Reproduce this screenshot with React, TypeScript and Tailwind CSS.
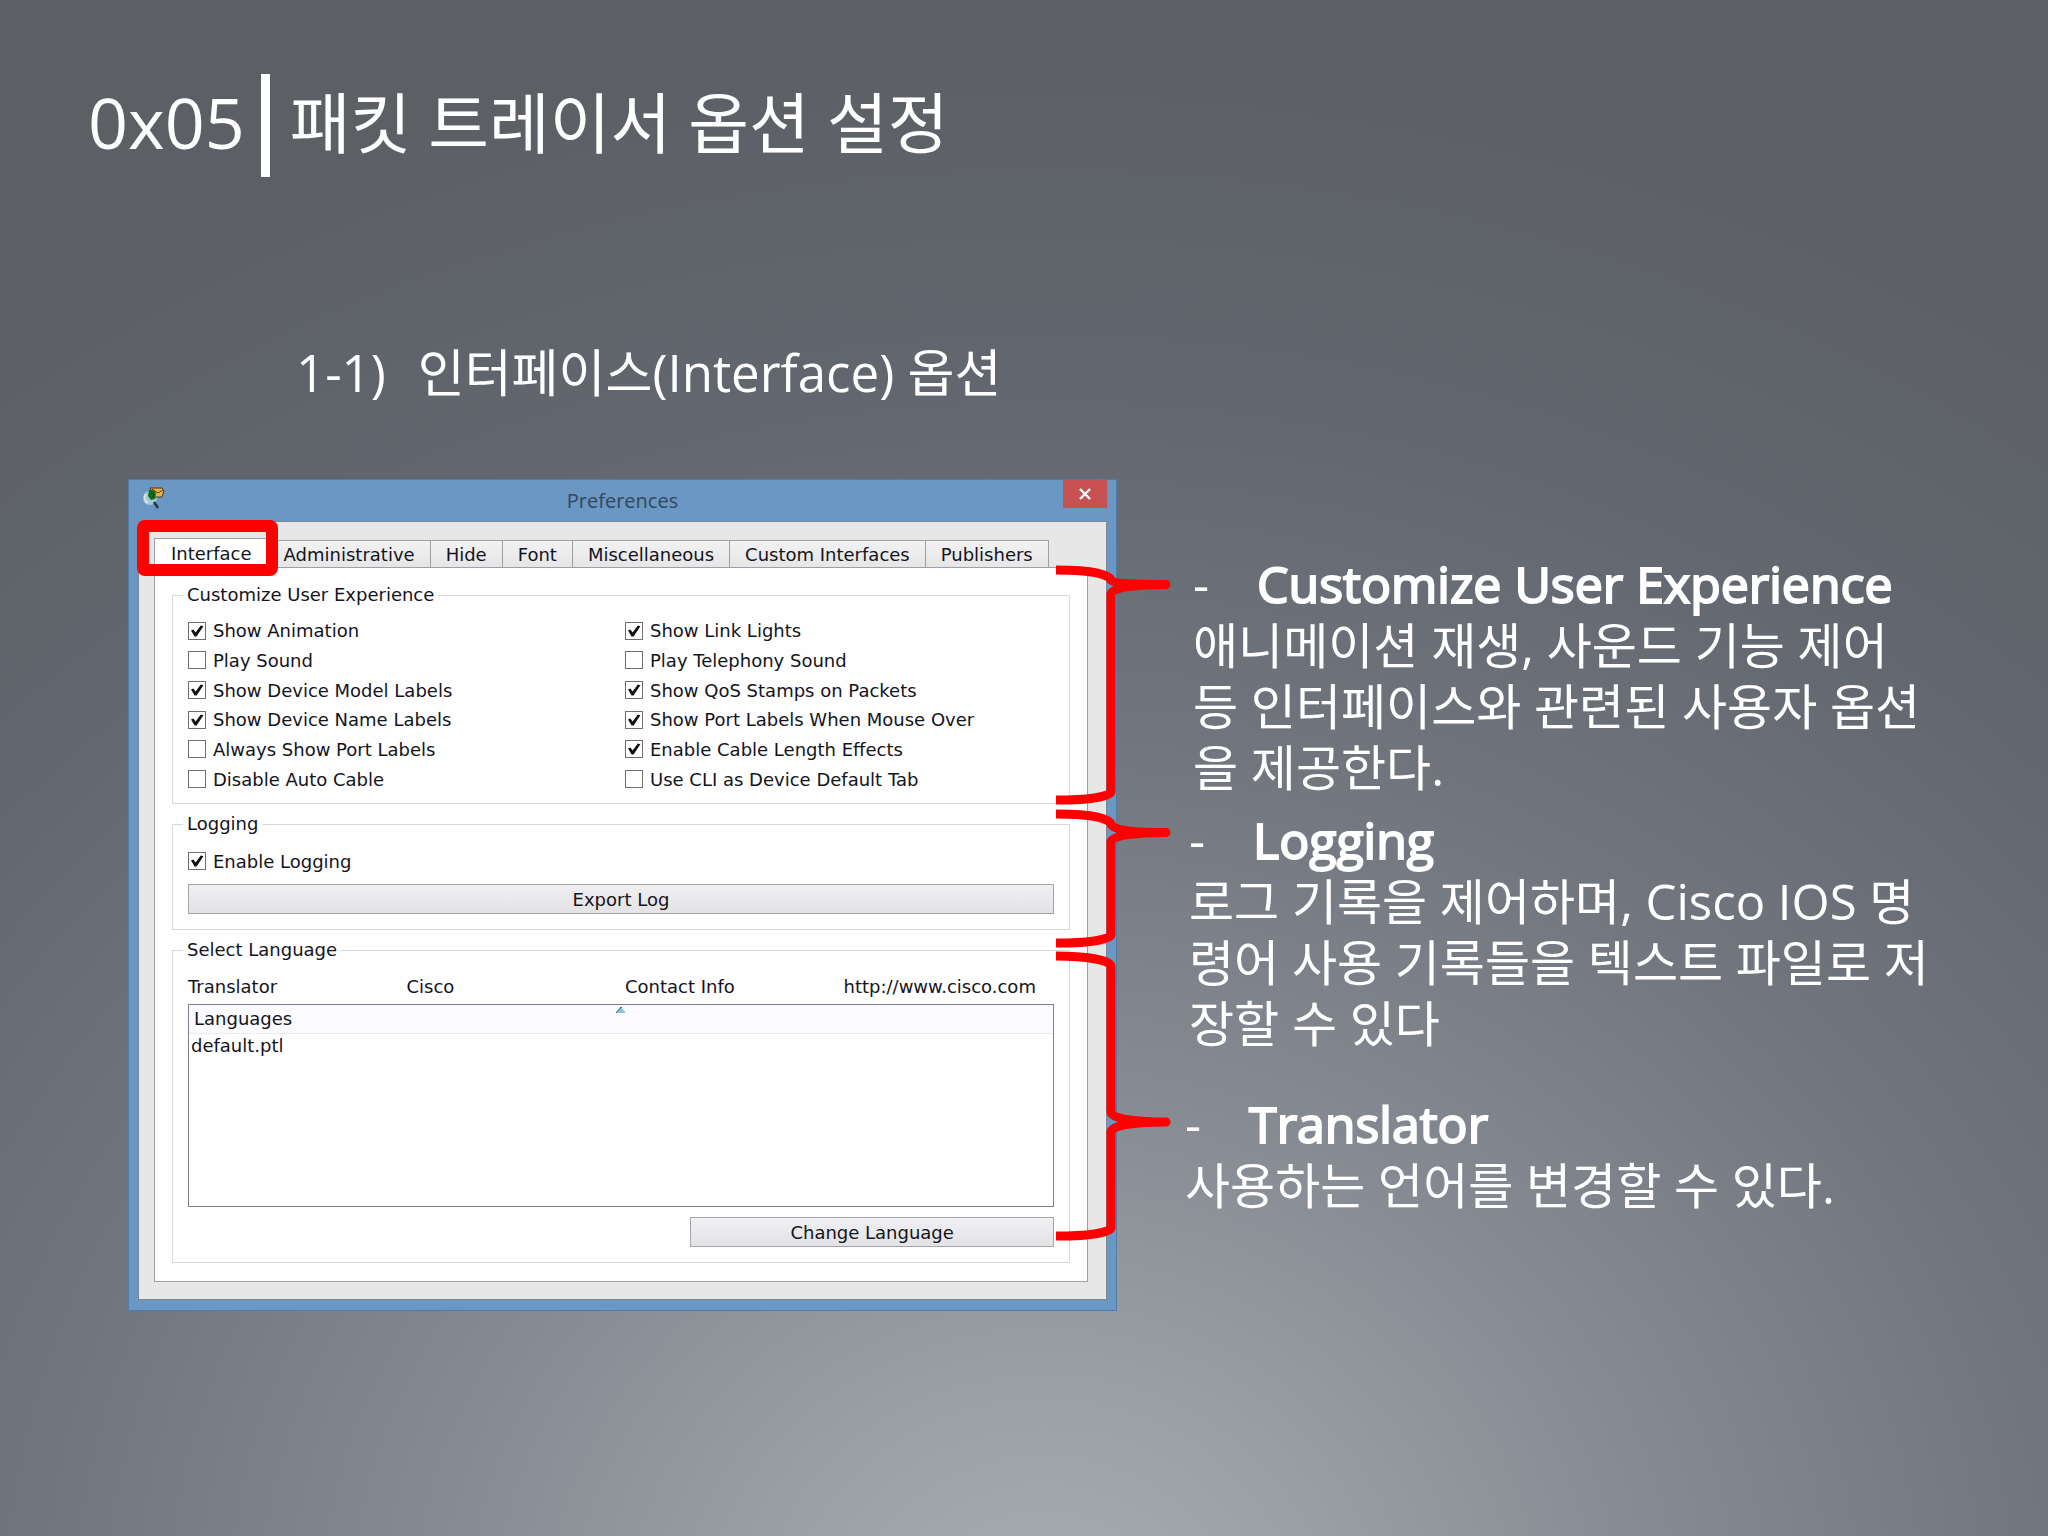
import { useState } from 'react';

const tabs = [
  'Interface',
  'Administrative',
  'Hide',
  'Font',
  'Miscellaneous',
  'Custom Interfaces',
  'Publishers',
];

// filled column by column
const options = [
  { label: 'Show Animation', on: true },
  { label: 'Play Sound', on: false },
  { label: 'Show Device Model Labels', on: true },
  { label: 'Show Device Name Labels', on: true },
  { label: 'Always Show Port Labels', on: false },
  { label: 'Disable Auto Cable', on: false },
  { label: 'Show Link Lights', on: true },
  { label: 'Play Telephony Sound', on: false },
  { label: 'Show QoS Stamps on Packets', on: true },
  { label: 'Show Port Labels When Mouse Over', on: true },
  { label: 'Enable Cable Length Effects', on: true },
  { label: 'Use CLI as Device Default Tab', on: false },
];

function Check({ label, on }: { label: string; on: boolean }) {
  const [checked, setChecked] = useState(on);
  return (
    <label className="flex items-center gap-[7px]">
      <span className="relative flex h-[18px] w-[18px]">
        <input
          type="checkbox"
          checked={checked}
          onChange={(e) => setChecked(e.target.checked)}
          className="h-full w-full appearance-none border border-[#6e6e6e] bg-white"
        />
        {checked && (
          <svg
            viewBox="0 0 18 18"
            className="pointer-events-none absolute inset-0"
          >
            <path
              d="M3 8.6 L5.4 7.6 L7.6 10.4 L12.8 3.4 L15.4 4.2 L8.6 14.4 L6.6 14.4 Z"
              fill="#111"
            />
          </svg>
        )}
      </span>
      {label}
    </label>
  );
}

function Group({
  title,
  children,
}: {
  title: string;
  children: React.ReactNode;
}) {
  return (
    <fieldset className="border border-[#d8d8dc] px-[15px]">
      <legend className="-ml-[5px] h-5 px-1 leading-5">{title}</legend>
      {children}
    </fieldset>
  );
}

function AppIcon() {
  return (
    <svg viewBox="0 0 24 24" className="h-6 w-6">
      <circle cx="8" cy="12" r="7" fill="#a9c6d3" />
      <path d="M4 8 a6 6 0 0 0 2 9" stroke="#d4e4ea" strokeWidth="2" fill="none" />
      <path d="M12 16 L16 22" stroke="#2b3640" strokeWidth="2.5" />
      <path d="M8 2 L20 2 L22 5 L20 11 L12 11 Z" fill="#e8b04a" stroke="#4a3a18" />
      <path d="M10 3 L16 7 L21 4" stroke="#5c3d10" fill="none" />
      <path d="M7 4 L11 4 L14 7 L13 13 L9 14 L6 10 Z" fill="#0f6b1c" />
      <path d="M9 7 L12 8 L11 11" stroke="#0a3d10" fill="none" />
    </svg>
  );
}

function Braces() {
  return (
    <svg
      viewBox="0 0 116 690"
      className="pointer-events-none absolute top-[81px] -right-[55px] h-[690px] w-[116px]"
      fill="none"
      stroke="#ff0000"
      strokeWidth="9"
      strokeLinejoin="round"
    >
      <path d="M0 10 C28 10 53 13 55 20 C58 24 82 24.5 110 24.5 C82 24.5 55 27 55 34 V232 C54 237 30 240 0 240" />
      <path d="M0 254 C28 254 53 257 55 264 C58 271 82 272.5 110 272.5 C82 272.5 55 275 55 282 V375 C54 380 30 383 0 383" />
      <path d="M0 396 C30 396 54 400 55 406 V552 C55 559 82 562 110 562 C82 562 55 565 55 572 V668 C54 673 30 676 0 676" />
    </svg>
  );
}

function Preferences() {
  const [active, setActive] = useState('Interface');
  const faceBtn =
    'block h-[30px] border border-[#a5a5a8] bg-linear-to-b from-[#f0eff1] to-[#e3e2e4] text-center';

  return (
    <div className="relative">
      <div className="border border-[#4f7da8] bg-[#6a97c3] px-[9px] pb-[10px] font-['DejaVu_Sans',sans-serif] text-[18px] text-[#14141c]">
        <div className="relative flex h-[41px] items-center justify-center">
          <div className="absolute top-1.5 left-1">
            <AppIcon />
          </div>
          <span className="font-['Open_Sans',sans-serif] text-[20px] text-[#34475c]">
            Preferences
          </span>
          <button
            aria-label="Close"
            className="absolute top-0 right-0 flex h-7 w-11 items-center justify-center bg-[#c75050]"
          >
            <svg viewBox="0 0 12 12" className="h-3 w-3">
              <path d="M1 1 L11 11 M11 1 L1 11" stroke="#fff" strokeWidth="2.4" />
            </svg>
          </button>
        </div>

        <div className="border border-[#7d8791] bg-[#e7e7e8] pt-4 pr-[18px] pb-[17px] pl-[15px]">
          <div role="tablist" className="flex items-end">
            {tabs.map((t) =>
              t === active ? (
                <div key={t} className="relative">
                  <button
                    role="tab"
                    aria-selected="true"
                    className="block h-[29px] border border-b-0 border-[#a0a0a4] bg-white px-4"
                  >
                    {t}
                  </button>
                  <div className="pointer-events-none absolute -top-[18px] -right-[9px] -bottom-[9px] -left-[17px] rounded-lg border-12 border-[#ff0000]" />
                </div>
              ) : (
                <button
                  key={t}
                  role="tab"
                  aria-selected="false"
                  onClick={() => setActive(t)}
                  className="h-[27px] border border-b-0 border-l-0 border-[#a0a0a4] bg-linear-to-b from-[#f2f2f2] to-[#e6e6e8] px-[15px]"
                >
                  {t}
                </button>
              ),
            )}
          </div>

          <div className="flex flex-col gap-[10px] border border-[#a0a0a4] bg-[#fefefe] px-[17px] pt-[17px] pb-[18px]">
            <Group title="Customize User Experience">
              <div className="mt-[11px] mb-[9px] grid h-[178px] grid-flow-col grid-cols-2 grid-rows-6 gap-x-2">
                {options.map((o) => (
                  <Check key={o.label} label={o.label} on={o.on} />
                ))}
              </div>
            </Group>

            <Group title="Logging">
              <div className="mt-3 flex h-[30px] items-center">
                <Check label="Enable Logging" on={true} />
              </div>
              <button className={faceBtn + ' mt-2 mb-[15px] w-full'}>
                Export Log
              </button>
            </Group>

            <Group title="Select Language">
              <div className="mt-[11px] grid h-[30px] grid-cols-4 items-center gap-x-2">
                <span>Translator</span>
                <span>Cisco</span>
                <span>Contact Info</span>
                <a href="http://www.cisco.com">http://www.cisco.com</a>
              </div>
              <div className="relative mt-[3px] h-[203px] border border-[#7c8088] bg-white">
                <table className="w-full text-left leading-6">
                  <thead>
                    <tr className="h-7 border-b border-[#ebebf2] bg-[#fbfaff]">
                      <th className="px-[5px] font-normal">Languages</th>
                    </tr>
                  </thead>
                  <tbody>
                    <tr>
                      <td className="px-0.5">default.ptl</td>
                    </tr>
                  </tbody>
                </table>
                <svg
                  viewBox="0 0 10 6"
                  className="absolute top-0.5 left-1/2 h-1.5 w-2.5 -translate-x-1/2"
                >
                  <path d="M0 6 L5 0 L10 6 Z" fill="#8cc3d6" />
                  <path d="M0 6 L5 0 L6 1" stroke="#33606f" fill="none" />
                </svg>
              </div>
              <button className={faceBtn + ' mt-[10px] mb-[15px] ml-auto w-[42%]'}>
                Change Language
              </button>
            </Group>
          </div>
        </div>
      </div>
      <Braces />
    </div>
  );
}

function NoteTitle({ children }: { children: React.ReactNode }) {
  return (
    <h3 className="flex gap-12 text-[50px] font-normal">
      <span>-</span>
      <span className="[-webkit-text-stroke:2px_white]">{children}</span>
    </h3>
  );
}

export default function App() {
  return (
    <main className="min-h-screen bg-[#5c6065] bg-[radial-gradient(ellipse_88%_104%_at_51%_106%,#a9acb4_0%,#9ba0a6_15%,#868b93_34%,#71767e_56%,#62676f_78%,#5c6065_100%)] pr-28 pl-32 font-['Open_Sans','Noto_Sans_CJK_KR',sans-serif] text-white">
      <header className="-ml-10 flex items-center gap-4 pt-[74px]">
        <span className="pb-2 text-[70px] leading-none">0x05</span>
        <div className="h-[103px] w-[9px] bg-white" />
        <h1 className="pb-2 pl-1 text-[66px] leading-none">
          패킷 트레이서 옵션 설정
        </h1>
      </header>

      <h2 className="mt-[165px] flex gap-8 pl-[168px] text-[51px] leading-[60px]">
        <span>1-1)</span>
        <span>인터페이스(Interface) 옵션</span>
      </h2>

      <div className="mt-[77px] grid grid-cols-[989fr_819fr]">
        <Preferences />

        <div className="pt-[75px] pl-[68px] text-[49px] leading-[61px] break-all">
          <section className="pl-2">
            <NoteTitle>Customize User Experience</NoteTitle>
            <p>
              애니메이션 재생, 사운드 기능 제어 등 인터페이스와 관련된 사용자
              옵션을 제공한다.
            </p>
          </section>
          <section className="mt-3 pl-1">
            <NoteTitle>Logging</NoteTitle>
            <p>
              로그 기록을 제어하며, Cisco IOS 명령어 사용 기록들을 텍스트 파일로
              저장할 수 있다
            </p>
          </section>
          <section className="mt-10">
            <NoteTitle>Translator</NoteTitle>
            <p>사용하는 언어를 변경할 수 있다.</p>
          </section>
        </div>
      </div>
    </main>
  );
}
